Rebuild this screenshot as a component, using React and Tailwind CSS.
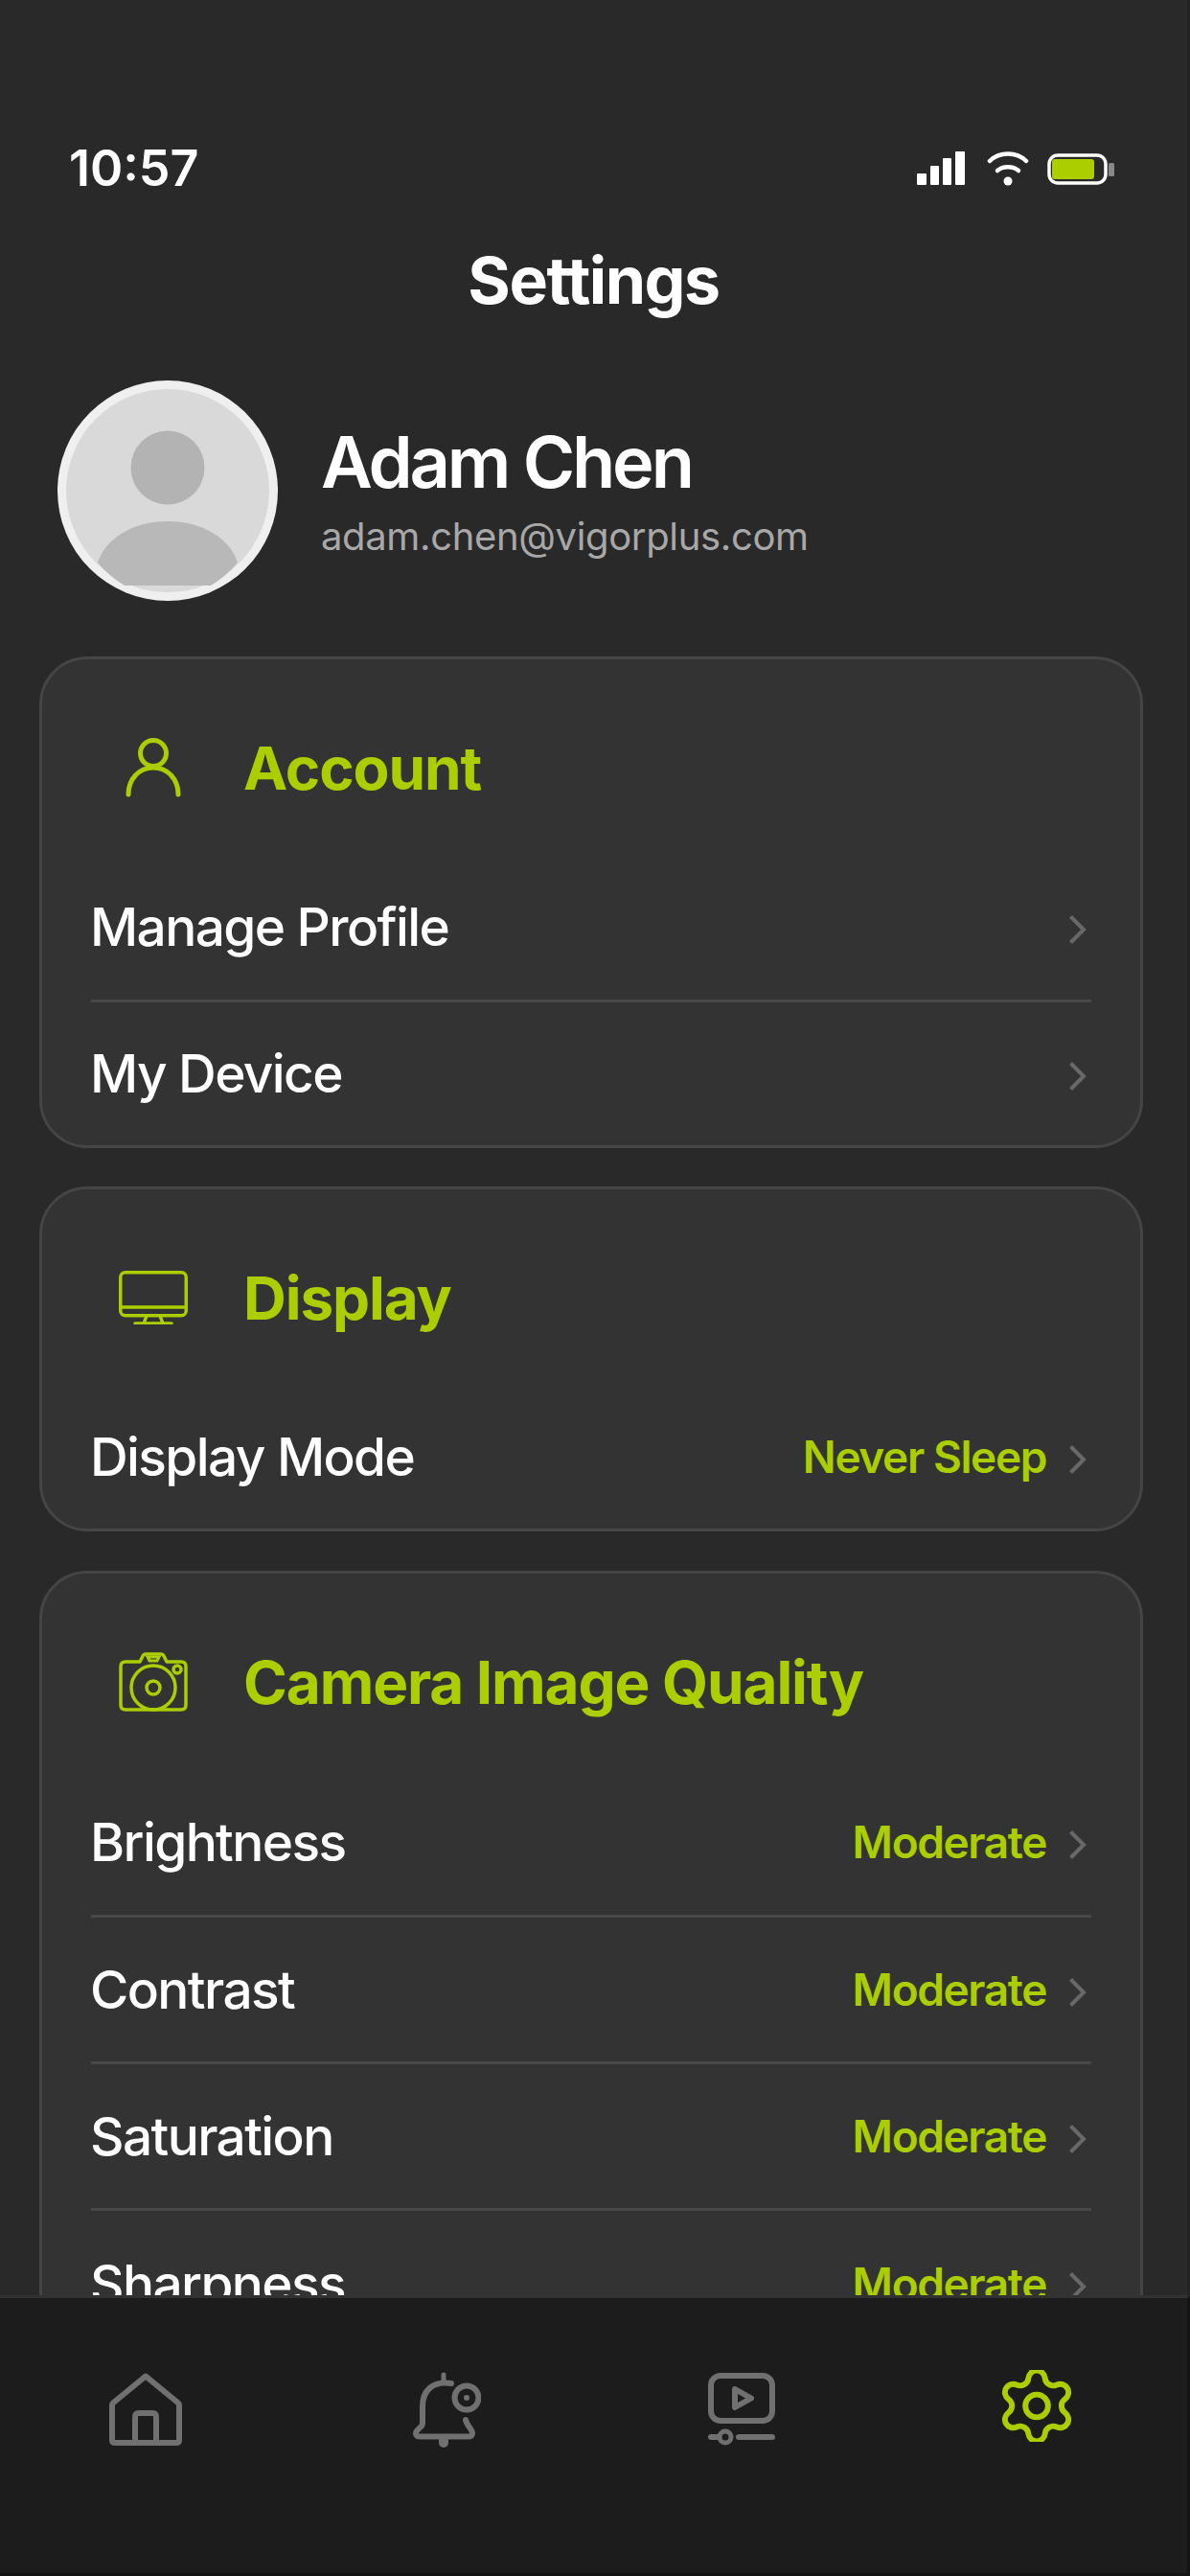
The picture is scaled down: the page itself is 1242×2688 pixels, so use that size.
const LIME = "#aace00";
const GREY = "#707070";

function Chevron() {
  return (
    <svg width="18" height="30" viewBox="0 0 18 30" fill="none" className="mr-[5px] mt-[5px] shrink-0">
      <path d="M1.500 1.500L15 15L1.500 28.500" stroke="#686868" strokeWidth="4" />
    </svg>
  );
}

function Row({ label, value, height, divider }) {
  return (
    <div className={`flex items-center justify-between ${height} ${divider ? "border-b-[3px] border-[#484848]" : ""}`}>
      <span className="-ml-[1px] text-[55px] font-medium tracking-[-1.600px] text-white">{label}</span>
      <span className="flex items-center gap-[24px]">
        {value && <span className="text-[46px] font-semibold tracking-[-1.400px] text-[#aace00]">{value}</span>}
        <Chevron />
      </span>
    </div>
  );
}

function Card({ icon, title, extra, children }) {
  return (
    <section className={`rounded-[50px] border-[3px] border-[#454545] bg-[#333333] px-[51px] ${extra || ""}`}>
      <div className="flex h-[204px] items-center gap-[34px] pt-[22px]">
        <div className="flex w-[125px] justify-center pl-[5px]">{icon}</div>
        <h2 className="text-[62px] font-bold tracking-[-1.100px] text-[#aace00]">{title}</h2>
      </div>
      {children}
    </section>
  );
}

const PersonIcon = (
  <svg width="58" height="62" viewBox="0 0 58 62" fill="none" stroke={LIME} strokeWidth="5" strokeLinecap="round">
    <circle cx="29" cy="16" r="13.500" />
    <path d="M3 59C3 43 14 31 29 31s26 12 26 28" />
  </svg>
);
const MonitorIcon = (
  <svg width="72" height="56" viewBox="0 0 72 56" fill="none" stroke={LIME} strokeWidth="3.500" strokeLinecap="round">
    <rect x="1.750" y="1.750" width="68.500" height="45" rx="5" />
    <path d="M2 38h68M29 47l-3 8M43 47l3 8M17 55h38" />
  </svg>
);
const CameraIcon = (
  <svg width="72" height="62" viewBox="0 0 72 62" fill="none" stroke={LIME} strokeWidth="3.500">
    <path d="M7 10h15l3-6q1-2 3-2h16q2 0 3 2l3 6h15q5 0 5 5v40q0 5-5 5H7q-5 0-5-5V15q0-5 5-5z" strokeLinejoin="round" />
    <path d="M30 5h12l-2 4h-8z" strokeWidth="3" />
    <circle cx="36" cy="37" r="23" />
    <circle cx="36" cy="37" r="7" />
    <circle cx="61" cy="18" r="4" />
  </svg>
);

function Avatar() {
  return (
    <svg width="230" height="230" viewBox="0 0 230 230" className="shrink-0">
      <defs>
        <clipPath id="avatarClip">
          <rect x="0" y="0" width="230" height="214" />
        </clipPath>
      </defs>
      <circle cx="115" cy="115" r="115" fill="#efefef" />
      <circle cx="115" cy="115" r="106" fill="#d9d9d9" />
      <circle cx="115" cy="91" r="38.500" fill="#b3b3b3" />
      <g clipPath="url(#avatarClip)">
        <path d="M42 190C50 165 78 147 115 147s65 18 73 43a106 106 0 0 1-28 24H70a106 106 0 0 1-28-24z" fill="#b8b8b8" />
      </g>
    </svg>
  );
}

function StatusIcons() {
  return (
    <div className="flex items-center">
      <svg width="50" height="36" viewBox="0 0 50 36" fill="white">
        <rect x="0" y="23" width="10" height="12" rx="1" />
        <rect x="14" y="15" width="9" height="20" rx="1" />
        <rect x="27" y="7" width="9" height="28" rx="1" />
        <rect x="40" y="0" width="10" height="35" rx="1" />
      </svg>
      <svg width="44" height="36" viewBox="0 0 44 36" fill="none" stroke="white" strokeWidth="4.500" strokeLinecap="round" className="ml-[23px]">
        <path d="M3 10C13 0 31 0 41 10" />
        <path d="M11 20c6-5 16-5 22 0" />
        <circle cx="22" cy="31" r="4.500" fill="white" stroke="none" />
      </svg>
      <svg width="70" height="33" viewBox="0 0 70 33" fill="none" className="ml-[19px]">
        <rect x="2" y="2" width="59" height="29" rx="9" stroke="white" strokeWidth="3.500" />
        <rect x="5" y="6" width="44" height="21" rx="3" fill={LIME} />
        <rect x="64" y="10" width="6" height="14" rx="1.500" fill="#888888" />
      </svg>
    </div>
  );
}

export default function App() {
  return (
    <div className="flex h-[2688px] w-[1242px] flex-col overflow-hidden bg-[#292929] text-white" style={{ fontFamily: "Inter, sans-serif" }}>
      <main className="min-h-0 flex-1 overflow-hidden border-r-[3px] border-[#232323]">
        <div className="flex items-center justify-between pl-[72px] pr-[76px] pt-[147px]">
          <span className="text-[52px] font-semibold leading-[58px]">10:57</span>
          <StatusIcons />
        </div>
        <h1 className="mt-[48px] text-center text-[68px] font-bold leading-[78px] tracking-[-1.500px]">Settings</h1>
        <div className="mt-[66px] flex items-center gap-[45px] pl-[60px]">
          <Avatar />
          <div>
            <div className="text-[74px] font-semibold leading-[82px] tracking-[-3.200px]">Adam Chen</div>
            <div className="mt-[13px] text-[40px] leading-[48px] tracking-[-0.350px] text-[#a8a8a8]">adam.chen@vigorplus.com</div>
          </div>
        </div>
        <div className="mt-[58px] flex flex-col gap-[40px] pl-[41px] pr-[46px]">
          <Card icon={PersonIcon} title="Account">
            <Row label="Manage Profile" height="h-[154px]" divider />
            <Row label="My Device" height="h-[149px]" />
          </Card>
          <Card icon={MonitorIcon} title="Display">
            <Row label="Display Mode" value="Never Sleep" height="h-[150px]" />
          </Card>
          <Card icon={CameraIcon} title="Camera Image Quality" extra="mt-[1px]">
            <Row label="Brightness" value="Moderate" height="h-[155px]" divider />
            <Row label="Contrast" value="Moderate" height="h-[153px]" divider />
            <Row label="Saturation" value="Moderate" height="h-[153px]" divider />
            <Row label="Sharpness" value="Moderate" height="h-[153px]" />
          </Card>
        </div>
      </main>
      <nav className="flex h-[293px] shrink-0 items-start border-b-[3px] border-r-[3px] border-t-[3px] border-b-[#141414] border-r-[#141414] border-t-[#323232] bg-[#1c1c1c] pl-[114px] pt-[75px]">
        <svg width="76" height="76" viewBox="0 0 76 76" fill="none" stroke={GREY} strokeWidth="6" strokeLinejoin="round" className="mt-[3px] shrink-0">
          <path d="M38 3.500L4.500 31q-1.500 1-1.500 3v36q0 3 3 3h64q3 0 3-3V34q0-2-1.500-3z" />
          <path d="M27 73V46q0-4 4-4h14q4 0 4 4v27" />
        </svg>
        <svg width="71" height="79" viewBox="0 0 71 79" fill="none" stroke={GREY} strokeWidth="6" strokeLinecap="round" className="ml-[241px] mt-[2px] shrink-0">
          <path d="M40 12C20 9 10 20 10 36v18c0 4-7 6-7 10q0 3.500 5 3.500h49q5 0 5-3.500c0-4-6-8-7-14" />
          <path d="M32 3v7" strokeWidth="5" />
          <path d="M32 72v2" strokeWidth="10" />
          <circle cx="56" cy="27" r="12.500" />
          <circle cx="56" cy="27" r="3" fill={GREY} stroke="none" />
        </svg>
        <svg width="70" height="77" viewBox="0 0 70 77" fill="none" stroke={GREY} strokeWidth="6" strokeLinecap="round" strokeLinejoin="round" className="ml-[237px] mt-[3px] shrink-0">
          <rect x="3" y="3" width="64" height="47" rx="10" />
          <path d="M28 17l17 9.500L28 36z" />
          <path d="M3 67h8M32 67h35" />
          <circle cx="18" cy="67" r="6" fill="#1c1c1c" strokeWidth="5" />
        </svg>
        <svg width="74" height="75" viewBox="2 2 20 20" fill="none" stroke={LIME} strokeWidth="1.600" strokeLinecap="round" strokeLinejoin="round" className="ml-[236px] shrink-0">
          <path d="M9.671 4.136a2.34 2.34 0 0 1 4.659 0 2.34 2.34 0 0 0 3.319 1.915 2.34 2.34 0 0 1 2.33 4.033 2.34 2.34 0 0 0 0 3.831 2.34 2.34 0 0 1-2.33 4.033 2.34 2.34 0 0 0-3.319 1.915 2.34 2.34 0 0 1-4.659 0 2.34 2.34 0 0 0-3.32-1.915 2.34 2.34 0 0 1-2.33-4.033 2.34 2.34 0 0 0 0-3.831A2.34 2.34 0 0 1 6.35 6.051a2.34 2.34 0 0 0 3.32-1.915" />
          <circle cx="12" cy="12" r="3.200" />
        </svg>
      </nav>
    </div>
  );
}
